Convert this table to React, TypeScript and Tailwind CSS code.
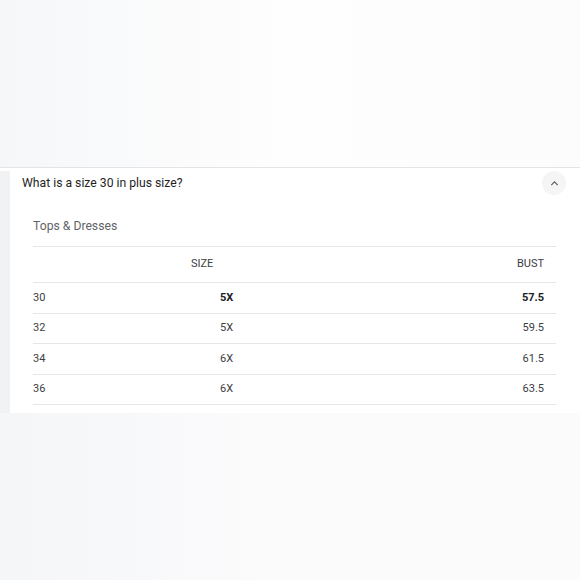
import React from "react";

const rows = [
  { a: "30", b: "5X", c: "57.5", bold: true },
  { a: "32", b: "5X", c: "59.5" },
  { a: "34", b: "6X", c: "61.5" },
  { a: "36", b: "6X", c: "63.5" },
];

export default function App() {
  return (
    <div
      className="w-[580px] h-[580px] flex flex-col bg-[#fbfbfc] overflow-hidden"
      style={{ fontFamily: "Roboto, 'Noto Sans', sans-serif" }}
    >
      <div className="h-[167px] bg-gradient-to-r from-[#f6f7f9] via-[#fefefe] to-[#fcfcfc]" />
      <div className="h-px bg-[#e4e4e6]" />
      <div className="h-[3px] bg-white" />
      <div className="flex">
        <div className="w-[10px] bg-[#f1f2f4]" />
        <div className="flex-1 bg-white pt-px pb-[8px]">
          <div className="flex items-center justify-between pl-[12px] pr-[14px] h-[22px]">
            <span className="text-[12.2px] text-[#1f1f1f]">What is a size 30 in plus size?</span>
            <div className="w-[24px] h-[24px] rounded-full bg-[#f5f5f6] flex items-center justify-center">
              <svg width="11" height="11" viewBox="0 0 24 24" fill="none" stroke="#5a5a5a" strokeWidth="2.4">
                <path d="M5 15.5l7-7 7 7" />
              </svg>
            </div>
          </div>
          <div className="pl-[23px] pr-[24px] mt-[23px]">
            <div className="text-[12.2px] leading-[18px] text-[#5f6368] pb-[11px] border-b border-[#e6e6e6]">
              Tops &amp; Dresses
            </div>
            <div className="flex items-center h-[36px] border-b border-[#e6e6e6] text-[11px] text-[#3c4043]">
              <div className="w-[158px]" />
              <div className="flex-1">SIZE</div>
              <div className="pr-[12px]">BUST</div>
            </div>
            {rows.map((r) => (
              <div
                key={r.a}
                className="flex items-center h-[30.5px] border-b border-[#e6e6e6] text-[11px] text-[#3c4043]"
              >
                <div className="w-[187px]">{r.a}</div>
                <div className={"flex-1 " + (r.bold ? "font-bold text-[#202124]" : "")}>{r.b}</div>
                <div className={"pr-[12px] " + (r.bold ? "font-bold text-[#202124]" : "")}>{r.c}</div>
              </div>
            ))}
          </div>
        </div>
      </div>
      <div className="flex-1 bg-gradient-to-r from-[#f5f6f8] via-[#fbfbfc] to-[#fbfbfc]" />
    </div>
  );
}
